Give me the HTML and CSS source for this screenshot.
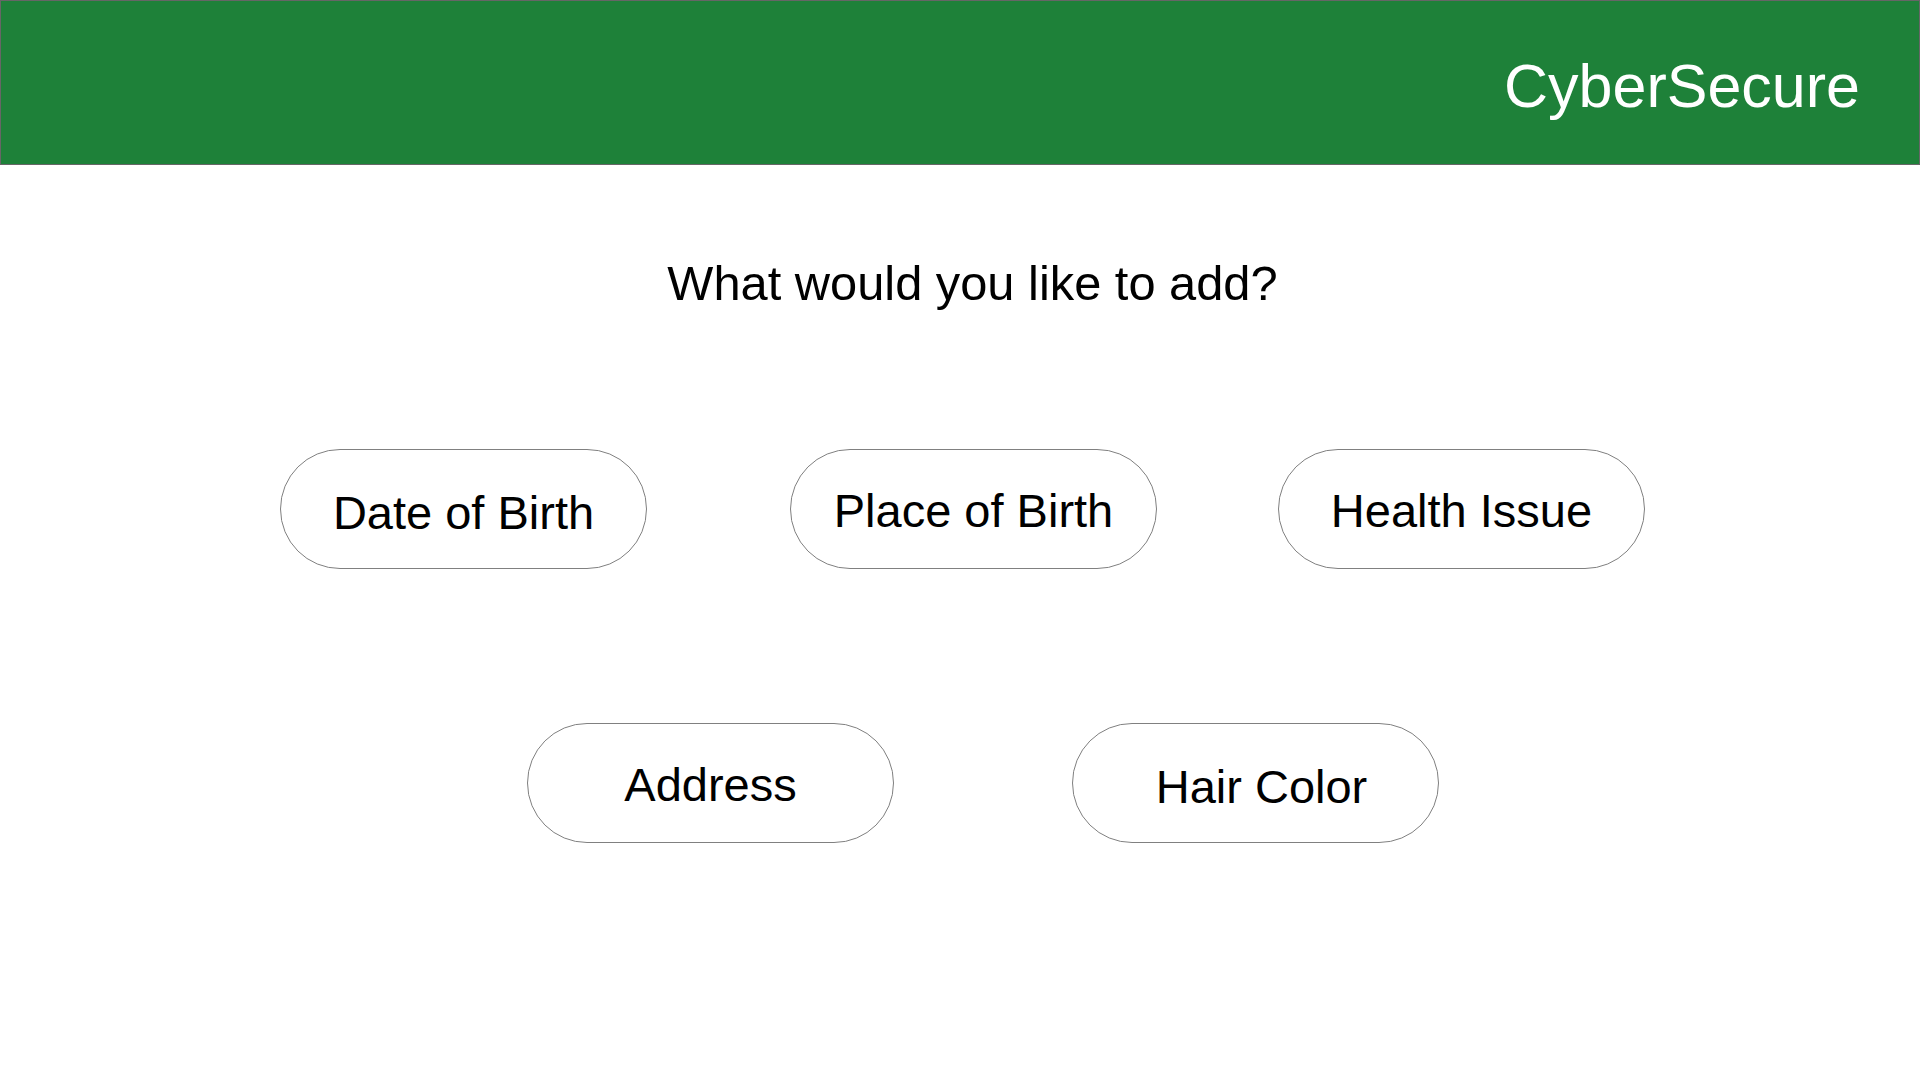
FILE: index.html
```html
<!DOCTYPE html>
<html lang="en">
<head>
<meta charset="utf-8">
<title>CyberSecure</title>
<link rel="stylesheet" href="styles.css">
</head>
<body>
<header class="topbar">
  <div class="brand">CyberSecure</div>
</header>
<main class="content">
  <h1 class="question">What would you like to add?</h1>
  <div class="row row-one">
    <button class="pill pill-low">Date of Birth</button>
    <button class="pill gap-a">Place of Birth</button>
    <button class="pill gap-b">Health Issue</button>
  </div>
  <div class="row row-two">
    <button class="pill">Address</button>
    <button class="pill gap-c pill-low pill-shift">Hair Color</button>
  </div>
</main>
</body>
</html>
```

FILE: styles.css
```css
* { box-sizing: border-box; }

html, body {
  margin: 0;
  padding: 0;
  background: #ffffff;
  font-family: "Liberation Sans", Arial, Helvetica, sans-serif;
  color: #000000;
}

.topbar {
  height: 165px;
  background: #1e8139;
  border: 1px solid #666666;
  display: flex;
  justify-content: flex-end;
  align-items: flex-start;
  padding: 51px 59px 0 0;
}

.brand {
  color: #ffffff;
  font-size: 61px;
  line-height: 68px;
  font-weight: 400;
}

.content {
  display: flex;
  flex-direction: column;
}

.question {
  margin: 90px 0 0 0;
  padding-left: 25px;
  text-align: center;
  font-size: 48.8px;
  line-height: 56px;
  font-weight: 400;
}

.row {
  display: flex;
  align-items: flex-start;
}

.row-one {
  margin-top: 138px;
  padding-left: 280px;
}

.row-two {
  margin-top: 154px;
  padding-left: 527px;
}

.pill {
  width: 367px;
  height: 120px;
  border: 1px solid #808080;
  border-radius: 60px;
  background: #ffffff;
  color: #000000;
  font-family: "Liberation Sans", Arial, Helvetica, sans-serif;
  font-size: 47px;
  line-height: 54px;
  display: flex;
  justify-content: center;
  align-items: center;
  padding: 4px 0 0 0;
  margin: 0;
  cursor: pointer;
}

.pill-low { padding-top: 8px; }
.pill-shift { padding-left: 12px; }

.gap-a { margin-left: 143px; }
.gap-b { margin-left: 121px; }
.gap-c { margin-left: 178px; }
```
